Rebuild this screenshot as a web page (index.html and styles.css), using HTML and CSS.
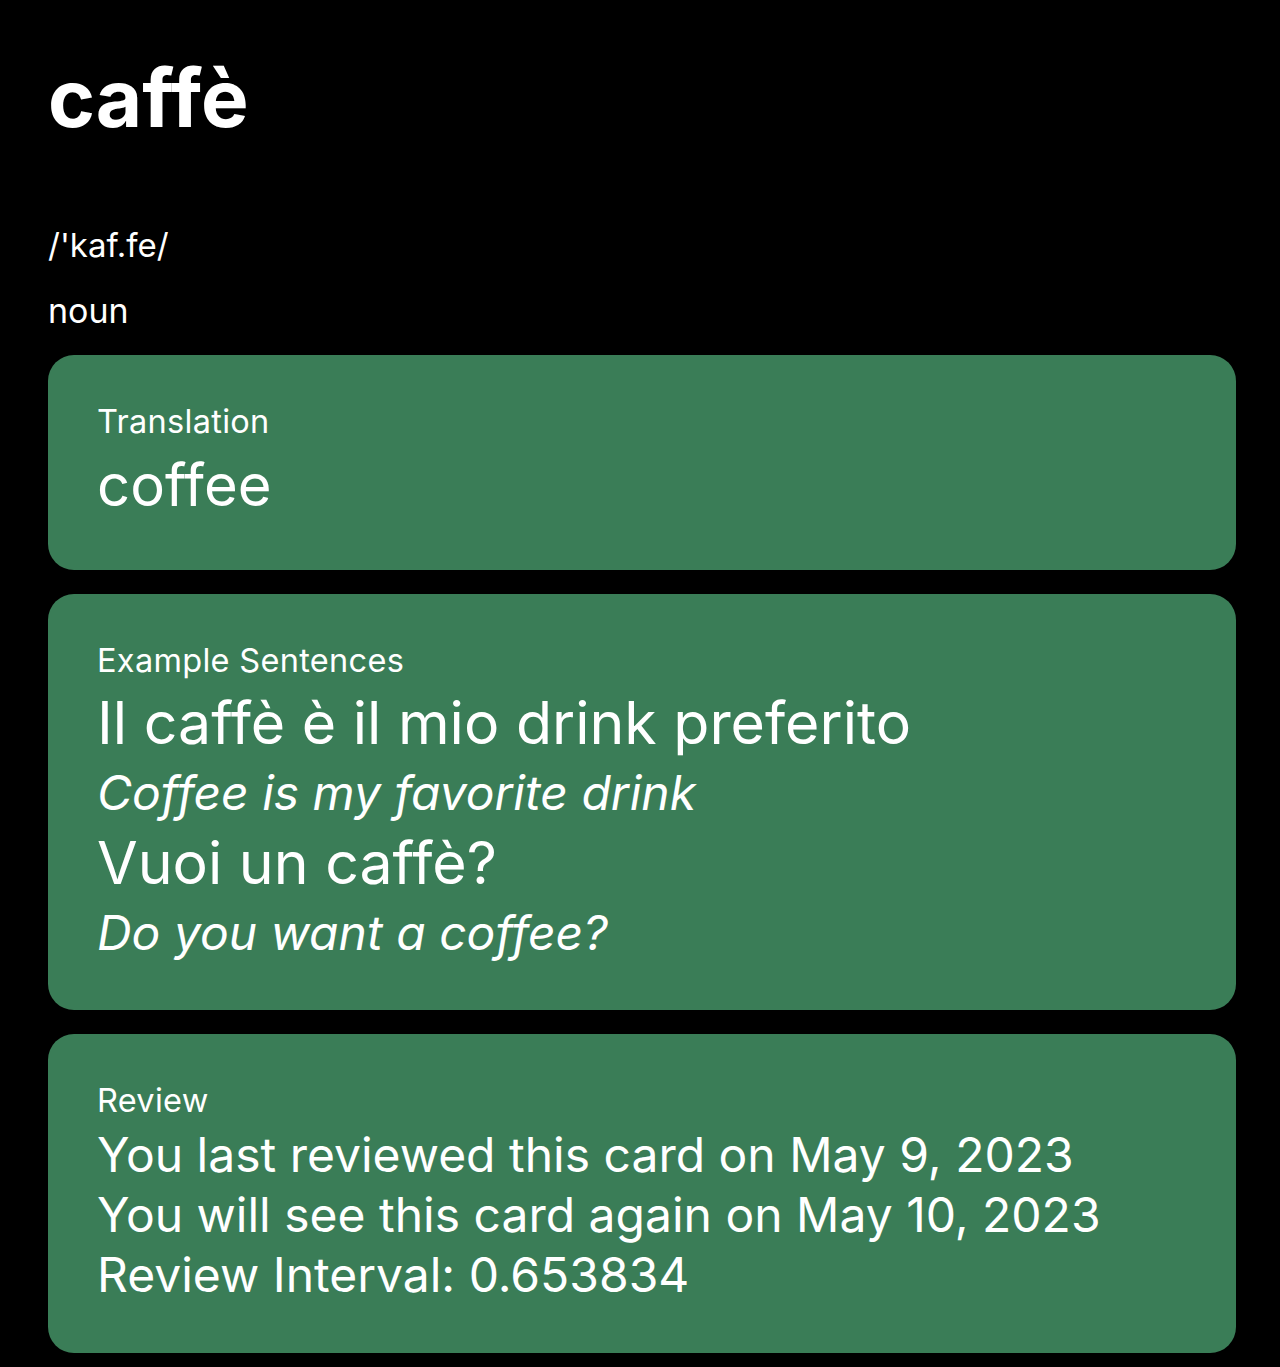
FILE: index.html
```html
<!DOCTYPE html>
<html lang="en">
<head>
<meta charset="utf-8">
<title>caffè</title>
<link rel="stylesheet" href="styles.css">
</head>
<body>
<main class="page">
  <h1 class="word">caffè</h1>
  <p class="phon">/'kaf.fe/</p>
  <p class="pos">noun</p>
  <section class="card card-translation">
    <div class="label">Translation</div>
    <div class="translation">coffee</div>
  </section>
  <section class="card card-examples">
    <div class="label">Example Sentences</div>
    <div class="sentence">Il caffè è il mio drink preferito</div>
    <div class="gloss">Coffee is my favorite drink</div>
    <div class="sentence">Vuoi un caffè?</div>
    <div class="gloss">Do you want a coffee?</div>
  </section>
  <section class="card card-review">
    <div class="label">Review</div>
    <div class="review-line">You last reviewed this card on May 9, 2023</div>
    <div class="review-line">You will see this card again on May 10, 2023</div>
    <div class="review-line">Review Interval: 0.653834</div>
  </section>
</main>
</body>
</html>
```
FILE: styles.css
```css
html, body {
  margin: 0;
  padding: 0;
  background: #000;
}
body {
  font-family: Inter, "Noto Sans", "Liberation Sans", sans-serif;
  color: #fff;
}
.page {
  padding: 48px 44px 0 48px;
  display: flex;
  flex-direction: column;
}
.word {
  margin: 0;
  font-size: 80px;
  font-weight: 700;
  line-height: 100px;
}
.phon {
  margin: 77px 0 0;
  font-size: 33px;
  line-height: 40px;
}
.pos {
  margin: 26px 0 0;
  font-size: 34px;
  line-height: 40px;
}
.card {
  background: #3a7d57;
  border-radius: 26px;
  margin-top: 24px;
  padding: 47px 49px 45px;
  display: flex;
  flex-direction: column;
}
.card-translation {
  padding-bottom: 48px;
}
.card-examples {
  padding-bottom: 43px;
}
.card-review {
  padding-bottom: 48px;
}
.label {
  font-size: 32.5px;
  line-height: 40px;
  margin-bottom: 6px;
  letter-spacing: 0.3px;
}
.translation {
  font-size: 58px;
  line-height: 74px;
}
.sentence {
  font-size: 59px;
  line-height: 72px;
}
.gloss {
  font-size: 48px;
  font-style: italic;
  line-height: 68px;
}
.review-line {
  font-size: 48px;
  line-height: 60px;
}
.card-review .label {
  margin-bottom: 4px;
}
```
